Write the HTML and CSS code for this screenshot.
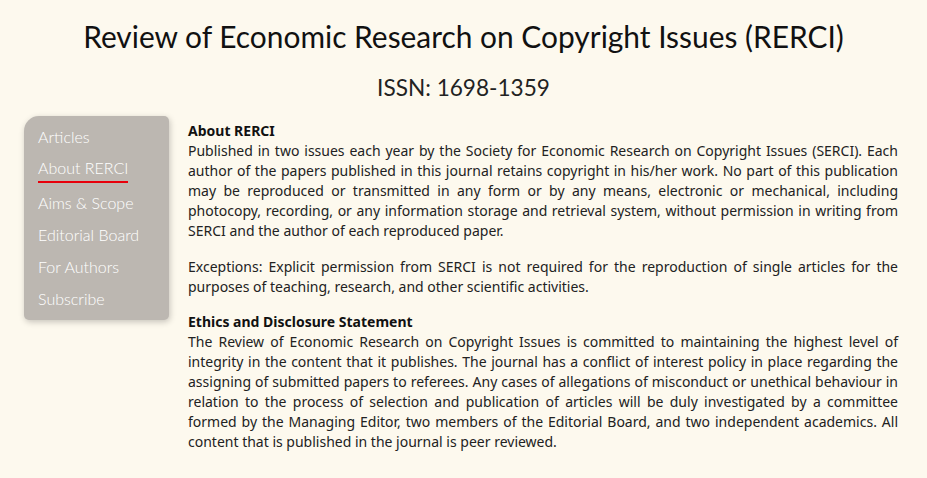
FILE: index.html
```html
<!DOCTYPE html>
<html lang="en">
<head>
<meta charset="utf-8">
<title>RERCI</title>
<link rel="stylesheet" href="styles.css">
</head>
<body>
<header class="header">
  <h1 class="title">Review of Economic Research on Copyright Issues (RERCI)</h1>
  <p class="issn">ISSN: 1698-1359</p>
</header>
<main class="main">
  <nav class="nav">
    <a class="nav-item" href="#">Articles</a>
    <a class="nav-item active" href="#">About RERCI</a>
    <a class="nav-item" href="#">Aims &amp; Scope</a>
    <a class="nav-item" href="#">Editorial Board</a>
    <a class="nav-item" href="#">For Authors</a>
    <a class="nav-item" href="#">Subscribe</a>
  </nav>
  <section class="content">
    <h2 class="heading">About RERCI</h2>
    <p class="para">Published in two issues each year by the Society for Economic Research on Copyright Issues (SERCI). Each author of the papers published in this journal retains copyright in his/her work. No part of this publication may be reproduced or transmitted in any form or by any means, electronic or mechanical, including photocopy, recording, or any information storage and retrieval system, without permission in writing from SERCI and the author of each reproduced paper.</p>
    <p class="para">Exceptions: Explicit permission from SERCI is not required for the reproduction of single articles for the purposes of teaching, research, and other scientific activities.</p>
    <h2 class="heading">Ethics and Disclosure Statement</h2>
    <p class="para">The Review of Economic Research on Copyright Issues is committed to maintaining the highest level of integrity in the content that it publishes. The journal has a conflict of interest policy in place regarding the assigning of submitted papers to referees. Any cases of allegations of misconduct or unethical behaviour in relation to the process of selection and publication of articles will be duly investigated by a committee formed by the Managing Editor, two members of the Editorial Board, and two independent academics. All content that is published in the journal is peer reviewed.</p>
  </section>
</main>
</body>
</html>
```
FILE: styles.css
```css
html, body {
  margin: 0;
  padding: 0;
  background: #fdf9ee;
}
body {
  font-family: "Noto Sans", "Liberation Sans", sans-serif;
  color: #222;
}
.header {
  padding-top: 18px;
  text-align: center;
}
.title {
  margin: 0;
  font-family: Lato, sans-serif;
  font-weight: 400;
  font-size: 29.9px;
  line-height: 36px;
  color: #111;
}
.issn {
  margin: 21px 0 0;
  font-family: Lato, sans-serif;
  font-size: 22.6px;
  line-height: 26px;
  color: #222;
}
.main {
  display: flex;
  align-items: flex-start;
  gap: 19px;
  padding: 15px 29px 0 24px;
}
.nav {
  flex: 0 0 145px;
  display: flex;
  flex-direction: column;
  align-items: flex-start;
  padding: 5px 0 5px 14px;
  box-sizing: border-box;
  background: #bcb7b1;
  border-radius: 15px 5px 5px 5px;
  box-shadow: 1px 2px 6px rgba(0, 0, 0, 0.22);
}
.nav-item {
  font-family: Lato, sans-serif;
  font-weight: 300;
  font-size: 16px;
  line-height: 32px;
  color: #ffffff;
  text-decoration: none;
  white-space: nowrap;
}
.nav-item.active {
  height: 26px;
  padding-top: 2px;
  margin-bottom: 4px;
  line-height: 26px;
  border-bottom: 2px solid #e8000b;
}
.content {
  flex: 1;
  padding-top: 5px;
  font-size: 14px;
  line-height: 20px;
}
.heading {
  margin: 0;
  font-size: 14px;
  font-weight: 700;
  line-height: 20px;
  color: #111;
}
.para {
  margin: 0 0 15.5px;
  text-align: justify;
}
```
